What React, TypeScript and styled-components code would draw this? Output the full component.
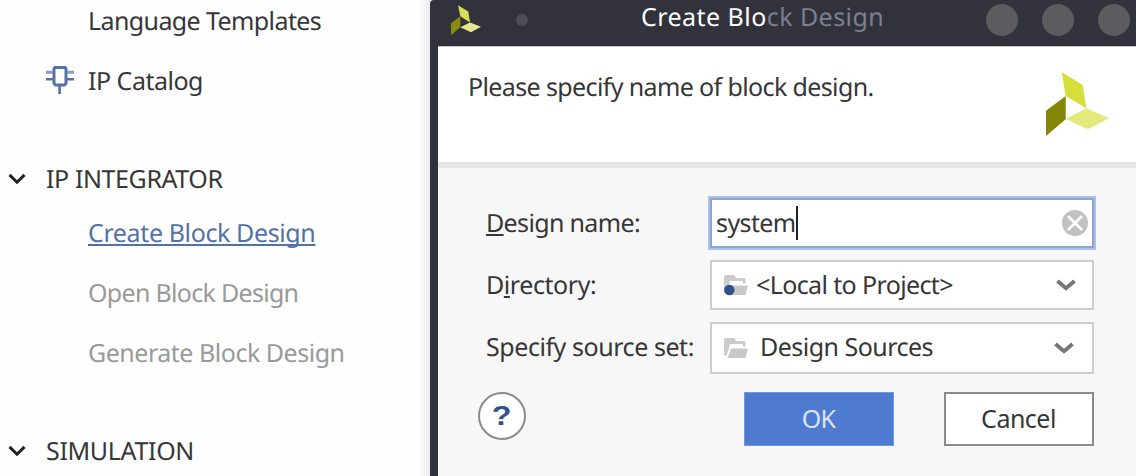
import React from "react";
import styled, { createGlobalStyle } from "styled-components";

const GlobalStyle = createGlobalStyle`
  * { box-sizing: border-box; }
  body {
    margin: 0;
    overflow: hidden;
    background: #fefefe;
    color: #363636;
    font: 25px/34px "Noto Sans", "Open Sans", sans-serif;
    text-rendering: geometricPrecision;
  }
  svg { display: block; flex: none; }
`;

const Screen = styled.div`
  display: flex;
  width: 1136px;
  height: 476px;
  overflow: hidden;
`;

const Sidebar = styled.nav`
  width: 430px;
  flex: none;
  background: linear-gradient(to right, #fefefe 418px, #ececec 430px);
`;

const Group = styled.section<{ $first?: boolean }>`
  margin-top: ${(p) => (p.$first ? -9 : 44)}px;
`;

const GroupHeader = styled.div<{ $track: number }>`
  display: flex;
  align-items: center;
  height: 48px;
  padding-left: 8px;
  gap: 20px;
  letter-spacing: ${(p) => p.$track}px;
`;

const NavItem = styled.div<{ $tone?: "link" | "muted"; $track: number }>`
  display: flex;
  align-items: center;
  height: 60px;
  padding-left: 46px;
  letter-spacing: ${(p) => p.$track}px;
  color: ${(p) =>
    p.$tone === "link" ? "#5470a6" : p.$tone === "muted" ? "#999" : "#363636"};
  text-decoration: ${(p) => (p.$tone === "link" ? "underline 2px" : "none")};
  text-underline-offset: 2px;
  text-decoration-skip-ink: none;
`;

const IconSlot = styled.span`
  width: 42px;
  flex: none;
  padding-bottom: 2px;
`;

const Dialog = styled.div`
  display: flex;
  flex-direction: column;
  width: 706px;
  border-left: 8px solid #31323b;
  border-top-left-radius: 4px;
  background: #f7f7f7;
`;

const TitleBar = styled.header`
  display: flex;
  align-items: center;
  height: 46px;
  padding: 0 6px 6px 13px;
  background: #31323b;
  flex: none;
`;

const Dot = styled.span<{ $size: number; $color: string }>`
  width: ${(p) => p.$size}px;
  height: ${(p) => p.$size}px;
  border-radius: 50%;
  background: ${(p) => p.$color};
  flex: none;
`;

const PinDot = styled(Dot)`
  margin-left: 35px;
`;

const Title = styled.h1`
  margin: -6px 0 0 113px;
  width: 345px;
  flex: none;
  font-size: 25px;
  font-weight: 400;
  letter-spacing: 0.45px;
  white-space: nowrap;
  color: #fff;
`;

const Faded = styled.span`
  color: #7d7f93;
`;

const WindowButtons = styled.div`
  display: flex;
  gap: 24px;
`;

const Banner = styled.div`
  display: flex;
  justify-content: space-between;
  height: 122px;
  padding: 23px 26px 0 30px;
  border-top: 1px solid #c4c4c6;
  border-bottom: 6px solid #e6e6e6;
  background: #fff;
  flex: none;
`;

const Prompt = styled.p<{ $track: number }>`
  margin: 0;
  letter-spacing: ${(p) => p.$track}px;
`;

const BannerLogo = styled.div`
  padding-top: 1px;
`;

const Form = styled.div`
  display: grid;
  grid-template-columns: 222px 388px;
  grid-template-rows: 54px 52px 52px;
  row-gap: 10px;
  align-items: start;
  margin: 28px 0 0 48px;
`;

const Label = styled.label<{ $track: number; $line?: number }>`
  line-height: ${(p) => p.$line ?? 50}px;
  letter-spacing: ${(p) => p.$track}px;
  white-space: nowrap;
  u {
    text-decoration: underline 2px;
    text-underline-offset: 2px;
    text-decoration-skip-ink: none;
  }
`;

const TextField = styled.div`
  display: flex;
  align-items: center;
  height: 54px;
  padding: 0 6px 0 3px;
  border: 2px solid #abc0e8;
  box-shadow: inset 0 0 0 2px #8ba4d4;
  background: #fff;
`;

const Value = styled.span<{ $track: number }>`
  flex: 1;
  line-height: 46px;
  align-self: flex-start;
  letter-spacing: ${(p) => p.$track}px;
  white-space: nowrap;
`;

const TextValue = styled(Value)`
  flex: none;
  line-height: 50px;
  padding-left: 3px;
`;

const Caret = styled.i`
  width: 2px;
  height: 34px;
  margin-right: auto;
  background: #222;
`;

const Select = styled.div<{ $gap: number; $end: number; $height: number }>`
  display: flex;
  align-items: center;
  gap: ${(p) => p.$gap}px;
  width: 384px;
  height: ${(p) => p.$height}px;
  margin-left: 2px;
  padding: 0 ${(p) => p.$end}px 0 12px;
  border: 2px solid #cdcdcd;
  border-radius: 1px;
  background: #fff;
`;

const Footer = styled.footer`
  display: flex;
  align-items: flex-start;
  margin: 18px 0 0 40px;
`;

const HelpButton = styled.button`
  display: flex;
  align-items: center;
  justify-content: center;
  width: 48px;
  height: 48px;
  padding: 0;
  border: 2px solid #8c8c8c;
  border-radius: 50%;
  background: #fff;
  color: #35528f;
  font: bold 28px/44px "Liberation Sans", Arial, sans-serif;
  margin-right: auto;
`;

const HelpMark = styled.span`
  transform: scaleX(1.15);
`;

const Actions = styled.div`
  display: flex;
  gap: 50px;
  margin-right: 42px;
`;

const Button = styled.button<{ $primary?: boolean; $track: number }>`
  width: 150px;
  height: 54px;
  padding: 0 1px 2px 0;
  border: ${(p) => (p.$primary ? "1px solid #7397db" : "2px solid #8b8b8b")};
  background: ${(p) => (p.$primary ? "#4e7bd0" : "#fff")};
  color: ${(p) => (p.$primary ? "#d9e4fa" : "#363636")};
  font: inherit;
  letter-spacing: ${(p) => p.$track}px;
`;

const Chevron = ({ color, size, weight }: { color: string; size: number; weight: number }) => (
  <svg width={size} height="12" viewBox={`0 0 ${size} 12`}>
    <path
      d={`M1.5 1.9 L${size / 2} 9.2 L${size - 1.5} 1.9`}
      fill="none"
      stroke={color}
      strokeWidth={weight}
    />
  </svg>
);

const ChipIcon = () => (
  <svg width="28" height="28" viewBox="0 0 28 28">
    <g fill="none" stroke="#5570a5">
      <path d="M9 1.5H19L20 2.5V17.5L18.5 19H9.5L8 17.5V2.5Z" strokeWidth="3" />
      <path d="M0 6.3H7M21 6.3H28" strokeWidth="3" stroke="#8799bf" />
      <path d="M0 13.2H7M21 13.2H28M13.6 19V28" strokeWidth="2.6" />
    </g>
  </svg>
);

const SmallLogo = () => (
  <svg width="30" height="31" viewBox="451 4.5 30 31">
    <path d="M458 4.7L468.3 11L470 22L460.3 15.7Z" fill="#dbdc55" />
    <path d="M460.3 15.7V26.7L451 34.7V22.7Z" fill="#8a8a0b" />
    <path d="M460.3 26.7L470 22L481 26.3L471 31.7Z" fill="#e6e891" />
  </svg>
);

const BigLogo = () => (
  <svg width="64" height="66" viewBox="1046 71 64 66">
    <path d="M1061.7 72L1082.7 85L1086.3 108.3L1065.7 96Z" fill="#d5df3b" />
    <path d="M1065.7 96V119.3L1046 136V110.7Z" fill="#838607" />
    <path d="M1065.7 119L1086.3 108.3L1109.3 118.3L1087.7 129.3Z" fill="#e3e97b" />
  </svg>
);

const FolderIcon = ({ marked }: { marked?: boolean }) => (
  <svg width="24" height="22" viewBox="0 0 24 22">
    <path d="M0 3Q0 1 2 1H9Q11 1 12 4H20Q21.5 4 21.5 6V9.5H19V7H5.5V10L2.5 18.5H0Z" fill="#cbcbcb" />
    <path d="M7 11.5H24L21.5 21H3.5Z" fill="#c8c8c8" />
    {marked && <circle cx="5.3" cy="16" r="5.2" fill="#34508a" />}
  </svg>
);

const ClearIcon = () => (
  <svg width="26" height="26" viewBox="0 0 26 26">
    <circle cx="13" cy="13" r="13" fill="#c1c1c1" />
    <path d="M6 6L20 20M20 6L6 20" stroke="#fff" strokeWidth="2.6" />
  </svg>
);

export default function App() {
  return (
    <>
      <GlobalStyle />
      <Screen>
        <Sidebar>
          <Group $first>
            <NavItem $track={-0.6}>
              <IconSlot />
              Language Templates
            </NavItem>
            <NavItem $track={-0.5}>
              <IconSlot>
                <ChipIcon />
              </IconSlot>
              IP Catalog
            </NavItem>
          </Group>
          <Group>
            <GroupHeader $track={-0.4}>
              <Chevron color="#222" size={18} weight={3} />
              IP INTEGRATOR
            </GroupHeader>
            <NavItem $tone="link" $track={-0.38}>
              <IconSlot />
              Create Block Design
            </NavItem>
            <NavItem $tone="muted" $track={-0.7}>
              <IconSlot />
              Open Block Design
            </NavItem>
            <NavItem $tone="muted" $track={-0.48}>
              <IconSlot />
              Generate Block Design
            </NavItem>
          </Group>
          <Group>
            <GroupHeader $track={-0.34}>
              <Chevron color="#222" size={18} weight={3} />
              SIMULATION
            </GroupHeader>
          </Group>
        </Sidebar>
        <Dialog>
          <TitleBar>
            <SmallLogo />
            <PinDot $size={12} $color="#4d4e53" />
            <Title>
              Create Blo<Faded>ck Design</Faded>
            </Title>
            <WindowButtons>
              <Dot $size={32} $color="#5c5b5f" />
              <Dot $size={32} $color="#5c5b5f" />
              <Dot $size={32} $color="#5c5b5f" />
            </WindowButtons>
          </TitleBar>
          <Banner>
            <Prompt $track={-0.62}>Please specify name of block design.</Prompt>
            <BannerLogo>
              <BigLogo />
            </BannerLogo>
          </Banner>
          <Form>
            <Label $track={-0.65} $line={54}>
              <u>D</u>esign name:
            </Label>
            <TextField>
              <TextValue $track={-0.6}>system</TextValue>
              <Caret />
              <ClearIcon />
            </TextField>
            <Label $track={-0.43}>
              D<u>i</u>rectory:
            </Label>
            <Select $gap={8} $end={16} $height={50}>
              <FolderIcon marked />
              <Value $track={-0.62}>&lt;Local to Project&gt;</Value>
              <Chevron color="#777" size={20} weight={4} />
            </Select>
            <Label $track={-0.44}>Specify source set:</Label>
            <Select $gap={12} $end={18} $height={52}>
              <FolderIcon />
              <Value $track={-0.52}>Design Sources</Value>
              <Chevron color="#777" size={20} weight={4} />
            </Select>
          </Form>
          <Footer>
            <HelpButton>
              <HelpMark>?</HelpMark>
            </HelpButton>
            <Actions>
              <Button $primary $track={-0.8}>OK</Button>
              <Button $track={-0.5}>Cancel</Button>
            </Actions>
          </Footer>
        </Dialog>
      </Screen>
    </>
  );
}
